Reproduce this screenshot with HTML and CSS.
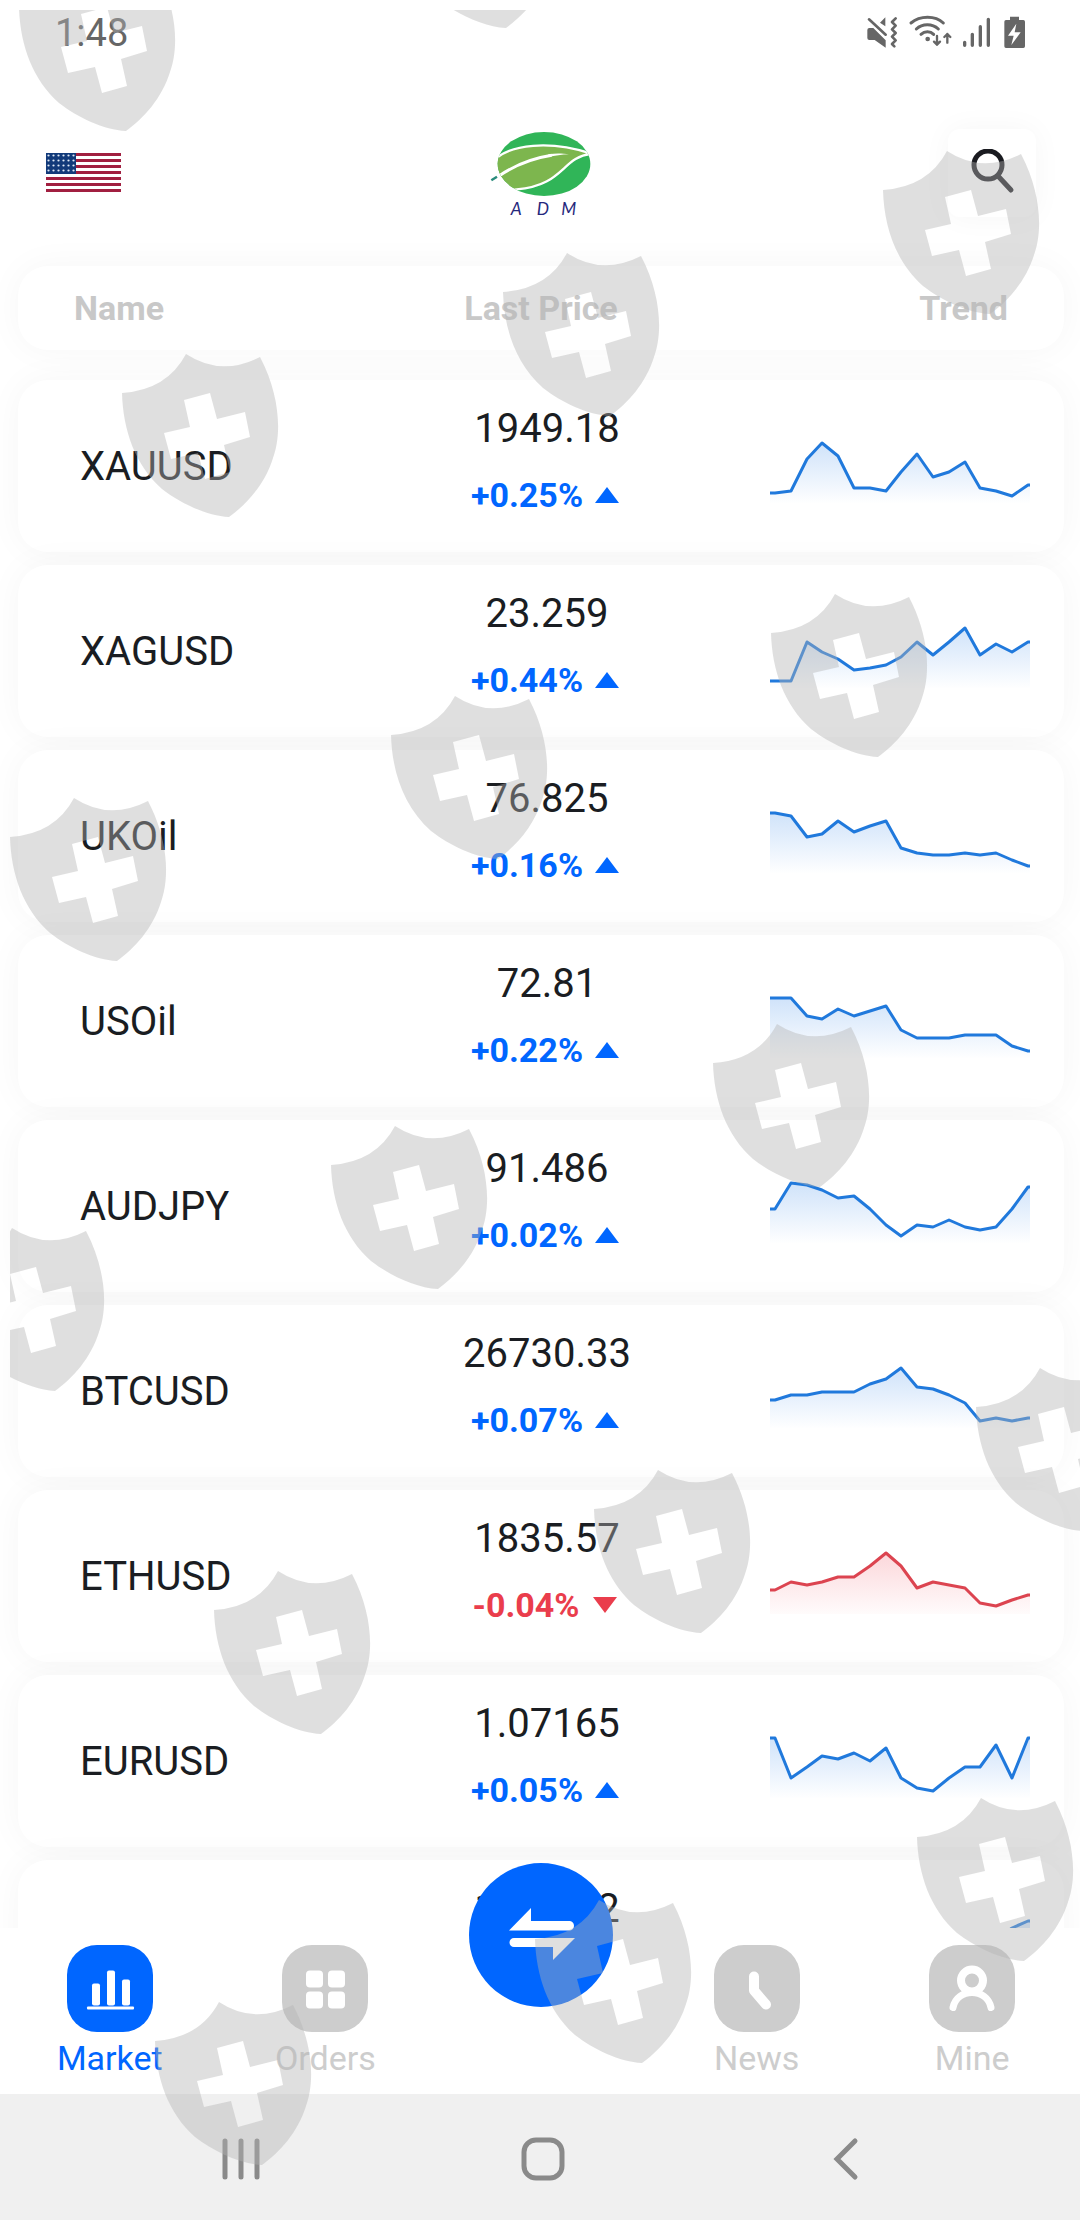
FILE: index.html
```html
<!DOCTYPE html>
<html lang="en">
<head>
  <meta charset="UTF-8" />
  <meta name="viewport" content="width=device-width, initial-scale=1.0"/>
  <title>ADM Market</title>
  <link rel="stylesheet" href="styles.css">
</head>
<body>

  <div class="app">
    <div class="status-bar">
      <span>1:48</span>
      <svg class="status-icons" viewBox="0 0 540 150" fill="none" stroke="#666" stroke-linecap="round" stroke-linejoin="round">
        <!-- muted, vibrate -->
        <path fill="#666" stroke="none" d="M22 66q0-6 6-6h12l37 37v22L44 96H28q-6 0-6-6zM76 28v27L60 44z"/>
        <path stroke-width="8" d="M27 34l50 46"/>
        <path stroke-width="8" d="M107 31l-11 11 11 11-11 11 11 11-11 11 11 11-11 11 7 7"/>
        <!-- wifi -->
        <path stroke-width="9" d="M153 45c27-23 73-23 97 0M169 63c18-17 48-17 66 0M183 79c11-10 28-10 38 0"/>
        <circle cx="203" cy="93" r="7" fill="#666" stroke="none"/>
        <path stroke-width="7" d="M231 84v26m-9-9l9 9 9-9M262 104V78m-9 9l9-9 9 9"/>
        <!-- signal -->
        <path stroke-width="10" d="M314 103v9M337 79v33M361 56v56M385 34v78"/>
        <!-- battery -->
        <path fill="#666" stroke="none" d="M450 26h27v10h13q5 0 5 5v74q0 5-5 5h-52q-5 0-5-5V41q0-5 5-5h12z"/>
        <path fill="#fff" stroke="none" d="M469 47l-25 36h17l-7 28 28-38h-18z"/>
      </svg>
    </div>

    <header class="topbar">
      <button type="button" class="lang" aria-label="Language">
        <svg width="75" height="39" viewBox="0 0 75 39">
          <defs>
            <pattern id="stars" width="5" height="5" patternUnits="userSpaceOnUse">
              <circle cx="2.5" cy="2.5" r="1.1" fill="#dfe8f5"/>
            </pattern>
          </defs>
          <rect width="75" height="39" fill="#fff"/>
          <path stroke="#a11f40" stroke-width="3" d="M0 1.5h75M0 7.5h75M0 13.5h75M0 19.5h75M0 25.5h75M0 31.5h75M0 37.5h75"/>
          <rect width="30" height="21" fill="#123a7a"/>
          <rect width="30" height="21" fill="url(#stars)"/>
        </svg>
      </button>

      <svg class="logo" viewBox="30 21 306 273">
        <defs>
          <clipPath id="oval"><ellipse cx="192" cy="132" rx="139" ry="96"/></clipPath>
        </defs>
        <g clip-path="url(#oval)">
          <rect x="30" y="27" width="306" height="220" fill="#30b558"/>
          <path fill="#7db64e" stroke="#fff" stroke-width="7" d="M40 122C90 72 210 60 334 101C245 112 250 198 110 208C70 215 30 180 40 122z"/>
          <path fill="none" stroke="#fff" stroke-width="9" d="M52 171C100 138 150 116 215 106"/>
          <path fill="#fff" d="M205 103C230 99 250 101 267 103C245 104 225 107 205 111z"/>
        </g>
        <path stroke="#2a8c7c" stroke-width="7" d="M34 181l17-11"/>
        <g class="logo-text">
          <text x="92" y="284">A</text>
          <text x="170" y="284">D</text>
          <text x="244" y="284">M</text>
        </g>
      </svg>

      <button type="button" class="search" aria-label="Search">
        <svg width="48" height="48" viewBox="0 0 48 48" fill="none" stroke="#1a1b20" stroke-linecap="round">
          <circle cx="20" cy="16" r="14" stroke-width="5"/>
          <path stroke-width="5" d="M30 27l13 14"/>
        </svg>
      </button>
    </header>

    <main class="market">
      <table class="quotes">
        <thead>
          <tr><th>Name</th><th>Last Price</th><th>Trend</th></tr>
        </thead>
        <tbody>
          <tr>
            <td class="name">XAUUSD</td>
            <td class="price">1949.18 <span class="change up">+0.25%</span></td>
            <td class="trend"><svg class="spark" data-y="113,111,79,63,76,108,108,111,92,74,97,92,82,108,111,116,105"></svg></td>
          </tr>
          <tr>
            <td class="name">XAGUSD</td>
            <td class="price">23.259 <span class="change up">+0.44%</span></td>
            <td class="trend"><svg class="spark" data-y="116,116,77,87,94,105,103,100,92,77,90,77,63,90,79,87,77"></svg></td>
          </tr>
          <tr>
            <td class="name">UKOil</td>
            <td class="price">76.825 <span class="change up">+0.16%</span></td>
            <td class="trend"><svg class="spark" data-y="63,66,87,84,71,82,76,71,98,103,105,105,103,105,103,110,116"></svg></td>
          </tr>
          <tr>
            <td class="name">USOil</td>
            <td class="price">72.81 <span class="change up">+0.22%</span></td>
            <td class="trend"><svg class="spark" data-y="63,63,81,84,74,81,76,71,95,103,103,103,100,100,100,111,116"></svg></td>
          </tr>
          <tr>
            <td class="name">AUDJPY</td>
            <td class="price">91.486 <span class="change up">+0.02%</span></td>
            <td class="trend"><svg class="spark" data-y="89,63,65,70,78,76,89,105,116,105,107,100,107,110,107,89,67"></svg></td>
          </tr>
          <tr>
            <td class="name">BTCUSD</td>
            <td class="price">26730.33 <span class="change up">+0.07%</span></td>
            <td class="trend"><svg class="spark" data-y="95,90,90,87,87,87,79,74,63,82,84,90,98,116,113,116,113"></svg></td>
          </tr>
          <tr>
            <td class="name">ETHUSD</td>
            <td class="price">1835.57 <span class="change down">-0.04%</span></td>
            <td class="trend"><svg class="spark falling" data-y="100,92,95,92,87,87,76,63,76,98,92,95,98,113,116,110,105"></svg></td>
          </tr>
          <tr>
            <td class="name">EURUSD</td>
            <td class="price">1.07165 <span class="change up">+0.05%</span></td>
            <td class="trend"><svg class="spark" data-y="63,103,92,81,84,78,86,73,103,113,116,103,92,92,70,103,63"></svg></td>
          </tr>
          <tr>
            <td class="name">GBPUSD</td>
            <td class="price">1.24532 <span class="change up">+0.03%</span></td>
            <td class="trend"><svg class="spark" data-y="95,98,101,96,92,90,96,104,110,116,108,101,94,88,80,68,61"></svg></td>
          </tr>
        </tbody>
      </table>
    </main>

    <nav class="tabs">
      <a href="#market" class="tab active">
        <svg class="tab-icon" viewBox="0 0 86 86">
          <rect x="25" y="38" width="8" height="22" rx="2"/>
          <rect x="40" y="25" width="8" height="35" rx="2"/>
          <rect x="55" y="34" width="8" height="26" rx="2"/>
          <rect x="20" y="61" width="47" height="3" rx="1"/>
        </svg>
        Market
      </a>
      <a href="#orders" class="tab">
        <svg class="tab-icon" viewBox="0 0 86 86">
          <rect x="24" y="25" width="17" height="17" rx="4"/>
          <rect x="46" y="25" width="17" height="17" rx="4"/>
          <rect x="24" y="46" width="17" height="17" rx="4"/>
          <rect x="46" y="46" width="17" height="17" rx="4"/>
        </svg>
        Orders
      </a>
      <button type="button" class="trade" aria-label="Trade">
        <svg viewBox="0 0 144 144" fill="#fff">
          <path d="M40 67.500L62 45v13h38a4.700 4.700 0 0 1 5 4.700a4.700 4.700 0 0 1-5 4.800z"/>
          <path d="M106 75L84 97V84H45a4.500 4.500 0 0 1 0-9z"/>
        </svg>
      </button>
      <a href="#news" class="tab">
        <svg class="tab-icon line" viewBox="0 0 86 86">
          <path stroke-width="10" d="M40 31v14l12 14"/>
        </svg>
        News
      </a>
      <a href="#mine" class="tab">
        <svg class="tab-icon line" viewBox="0 0 86 86">
          <circle cx="43" cy="35" r="11" stroke-width="8"/>
          <path stroke-width="7" d="M24 62C28 42 58 42 62 62"/>
        </svg>
        Mine
      </a>
    </nav>

    <div class="system-bar">
      <button type="button" aria-label="Recent apps">
        <svg width="48" height="48" viewBox="0 0 48 48"><path d="M8 6v36M24 6v36M40 6v36"/></svg>
      </button>
      <button type="button" aria-label="Home">
        <svg width="48" height="48" viewBox="0 0 48 48"><rect x="5" y="5" width="38" height="38" rx="12"/></svg>
      </button>
      <button type="button" aria-label="Back">
        <svg width="48" height="48" viewBox="0 0 48 48"><path d="M34 6L16 24l18 18"/></svg>
      </button>
    </div>

    <!-- shield overlay, lies over the whole screen -->
    <svg class="shields" viewBox="10 10 1070 2210" preserveAspectRatio="xMinYMin slice" aria-hidden="true">
      <defs>
        <path id="shield" fill-rule="evenodd" d="M0 39Q45 36 64 0Q99 23 138 3C158 41 160 80 151 104C143 130 125 150 107 163C85 162 58 149 40 135C13 111 1 76 0 39zM62 46L88 39L95 65L123 58L128 83L102 91L108 118L83 125L76 99L49 105L42 79L68 73z"/>
      </defs>
      <use href="#shield" x="19" y="-32"/>
      <use href="#shield" x="399" y="-135"/>
      <use href="#shield" x="883" y="151"/>
      <use href="#shield" x="503" y="253"/>
      <use href="#shield" x="122" y="354"/>
      <use href="#shield" x="771" y="594"/>
      <use href="#shield" x="391" y="696"/>
      <use href="#shield" x="10" y="798"/>
      <use href="#shield" x="713" y="1024"/>
      <use href="#shield" x="331" y="1126"/>
      <use href="#shield" x="-52" y="1228"/>
      <use href="#shield" x="976" y="1368"/>
      <use href="#shield" x="594" y="1470"/>
      <use href="#shield" x="214" y="1571"/>
      <use href="#shield" x="917" y="1798"/>
      <use href="#shield" x="535" y="1900"/>
      <use href="#shield" x="155" y="2002"/>
    </svg>
  </div>

  <svg width="0" height="0" class="defs" aria-hidden="true">
    <defs>
      <linearGradient id="fade-up" gradientUnits="userSpaceOnUse" x1="0" y1="60" x2="0" y2="124">
        <stop offset="0" stop-color="#1c78e6" stop-opacity="0.22"/>
        <stop offset="1" stop-color="#1c78e6" stop-opacity="0"/>
      </linearGradient>
      <linearGradient id="fade-down" gradientUnits="userSpaceOnUse" x1="0" y1="60" x2="0" y2="124">
        <stop offset="0" stop-color="#f04050" stop-opacity="0.22"/>
        <stop offset="1" stop-color="#f04050" stop-opacity="0.02"/>
      </linearGradient>
    </defs>
  </svg>

  <script>
    const base = 124;

    document.querySelectorAll(".spark").forEach(function (svg) {
      const ys = svg.dataset.y.split(",");
      let points = "0," + ys[0];
      ys.forEach(function (y, i) {
        points += " " + Math.round(5 + i * 15.8) + "," + y;
      });
      points += " 260," + ys[ys.length - 1];

      svg.setAttribute("viewBox", "0 0 260 172");
      svg.innerHTML =
        '<polygon points="0,' + base + " " + points + " 260," + base + '"/>' +
        '<polyline points="' + points + '"/>';
    });
  </script>

</body>
</html>
```
FILE: styles.css
```css
* {
  box-sizing: border-box;
}

body {
  margin: 0;
  font-family: Roboto, "Liberation Sans", sans-serif;
  color: #1a1d22;
  background-color: #fff;
}

button {
  padding: 0;
  border: none;
  background: none;
  cursor: pointer;
}

svg {
  display: block;
}

.defs {
  position: absolute;
}

.app {
  position: relative;
  display: flex;
  flex-direction: column;
  height: 100vh;
  overflow: hidden;
}

/* status bar */
.status-bar {
  display: flex;
  justify-content: space-between;
  align-items: center;
  height: 66px;
  padding: 0 40px 0 55px;
  font-size: 38px;
  color: #666;
}

.status-icons {
  width: 180px;
  height: 50px;
}

/* header */
.topbar {
  display: grid;
  grid-template-columns: 1fr auto 1fr;
  align-items: center;
  padding: 61px 44px 0 46px;
}

.lang {
  justify-self: start;
}

.logo {
  width: 102px;
  height: 91px;
  overflow: visible;
}

.logo-text {
  font-family: Lato, sans-serif;
  font-size: 52px;
  font-style: italic;
  fill: #26287c;
}

.search {
  display: flex;
  justify-content: center;
  align-items: center;
  justify-self: end;
  width: 88px;
  height: 88px;
  border-radius: 12px;
  box-shadow: 0 0 30px rgba(0, 0, 0, 0.04);
}

/* quotes */
.market {
  flex: 1;
  min-height: 0;
  padding: 48px 16px 0 18px;
  overflow-y: auto;
  scrollbar-width: none;
}

.quotes,
.quotes thead,
.quotes tbody {
  display: block;
}

.quotes tr {
  display: grid;
  grid-template-columns: repeat(3, 1fr);
  align-items: center;
  border-radius: 30px;
  background-color: #fff;
  box-shadow: 0 0 36px rgba(0, 0, 0, 0.04);
}

.quotes thead tr {
  height: 84px;
  padding: 0 56px;
  margin-bottom: 30px;
}

.quotes tbody tr {
  padding-left: 12px;
  margin-bottom: 13px;
}

.quotes th,
.quotes td {
  padding: 0;
}

.quotes th {
  font-size: 34px;
  font-weight: bold;
  color: #c8c8c8;
}

.quotes th:first-child {
  text-align: left;
}

.quotes th:last-child {
  text-align: right;
}

.quotes .name {
  padding-left: 50px;
  font-size: 40px;
}

.quotes .price {
  padding-bottom: 8px;
  font-size: 40px;
  line-height: 66px;
  text-align: center;
}

.change {
  display: flex;
  justify-content: center;
  align-items: center;
  gap: 12px;
  font-size: 34px;
  font-weight: bold;
}

.change::after {
  content: "";
  margin-right: 4px;
  border-left: 12px solid transparent;
  border-right: 12px solid transparent;
}

.up {
  color: #0066ff;
}

.up::after {
  border-bottom: 16px solid #0066ff;
}

.down {
  gap: 14px;
  color: #ea3d4c;
}

.down::after {
  border-top: 16px solid #ea3d4c;
}

.quotes .trend {
  justify-self: end;
  padding-right: 34px;
}

.spark {
  width: 260px;
  height: 172px;
}

.spark polyline {
  fill: none;
  stroke: #2079dc;
  stroke-width: 3;
  stroke-linejoin: round;
}

.spark polygon {
  fill: url(#fade-up);
}

.falling polyline {
  stroke: #dc4450;
}

.falling polygon {
  fill: url(#fade-down);
}

/* bottom tabs */
.tabs {
  position: relative;
  display: grid;
  grid-template-columns: repeat(5, 1fr);
  justify-items: center;
  align-items: start;
  height: 166px;
  padding-top: 17px;
  padding-left: 2px;
  background-color: #fff;
}

.tab {
  display: flex;
  flex-direction: column;
  align-items: center;
  gap: 6px;
  font-size: 34px;
  line-height: 40px;
  color: #cdcdcd;
  text-decoration: none;
}

.tab-icon {
  width: 86px;
  height: 87px;
  border-radius: 30px;
  background-color: #cdcdcd;
  fill: #fff;
}

.tab-icon.line {
  fill: none;
  stroke: #fff;
  stroke-linecap: round;
  stroke-linejoin: round;
}

.tab.active {
  color: #0066ff;
}

.tab.active .tab-icon {
  background-color: #0066ff;
}

.trade {
  width: 144px;
  height: 144px;
  margin-top: -82px;
  border-radius: 50%;
  background-color: #0066ff;
}

/* system navigation */
.system-bar {
  position: relative;
  display: flex;
  justify-content: space-around;
  align-items: center;
  height: 126px;
  padding: 4px 84px 0 90px;
  background-color: #f0f0f0;
}

.system-bar svg {
  fill: none;
  stroke: #8a8a8a;
  stroke-width: 5;
  stroke-linecap: round;
}

.shields {
  position: absolute;
  inset: 10px 0 0 10px;
  width: calc(100% - 10px);
  height: calc(100% - 10px);
  fill: rgba(178, 178, 178, 0.42);
  pointer-events: none;
}
```
